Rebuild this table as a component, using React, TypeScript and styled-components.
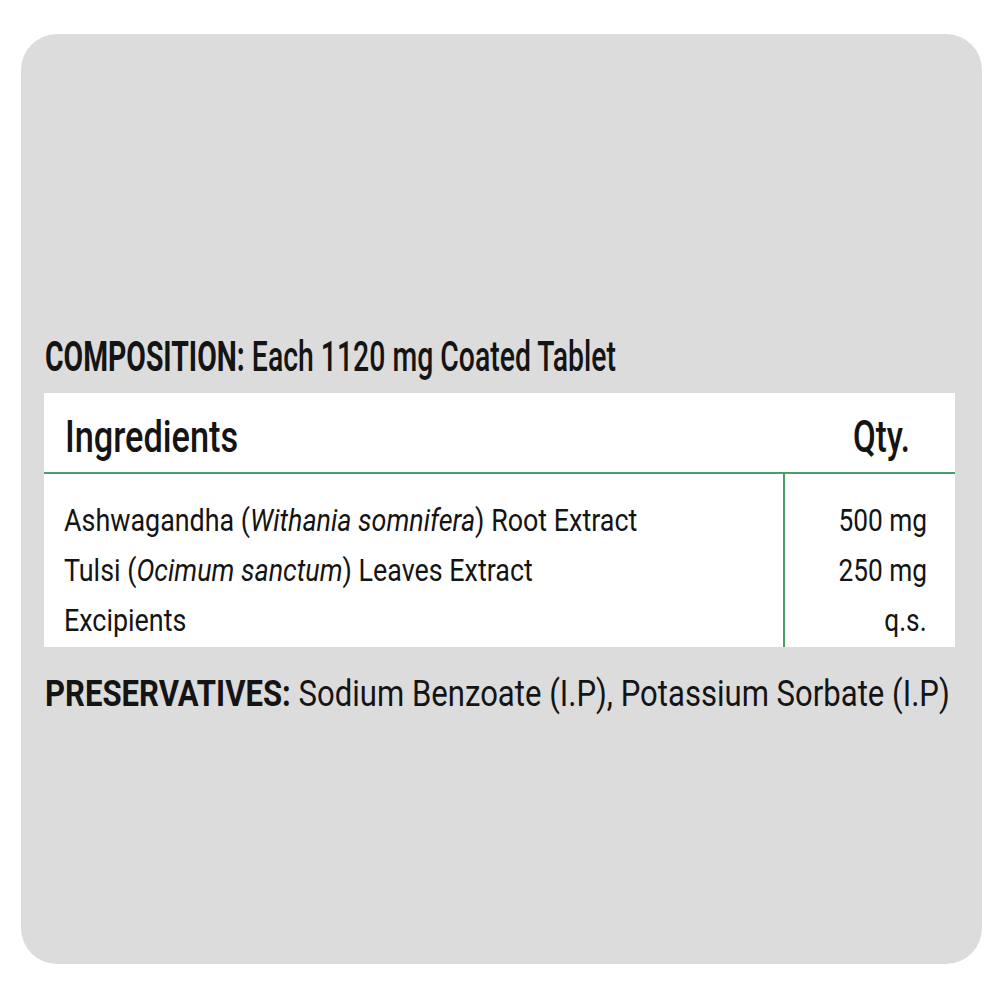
import React from "react";
import styled, { createGlobalStyle } from "styled-components";

const Global = createGlobalStyle`
  html, body { margin: 0; padding: 0; background: #ffffff; overflow: hidden; }
  body { font-family: Roboto, "Liberation Sans", sans-serif; color: #141414; }
`;

const Page = styled.div`
  width: 1000px;
  height: 1000px;
  padding: 34px 18px 36px 21px;
  box-sizing: border-box;
`;

const Card = styled.div`
  height: 100%;
  background: #dcdcdc;
  border-radius: 36px;
  display: flex;
  flex-direction: column;
  align-items: stretch;
  padding: 299px 27px 0 23px;
  box-sizing: border-box;
  overflow: hidden;
`;

/* Condensed rendering of a line of text */
const Squeeze = styled.span<{ $scale: number; $right?: boolean }>`
  display: inline-block;
  white-space: nowrap;
  transform: scaleX(${(p) => p.$scale});
  transform-origin: ${(p) => (p.$right ? "right" : "left")} center;
`;

const Title = styled.h1`
  margin: 0 0 12px 1px;
  font-size: 42px;
  font-weight: 500;
  line-height: 48px;
  color: #141414;
`;

const Strong = styled.span<{ $weight?: number }>`
  font-weight: ${(p) => p.$weight ?? 700};
`;

const Table = styled.div`
  background: #fff;
  display: grid;
  grid-template-columns: 739px 1fr;
`;

const HeadCell = styled.div<{ $right?: boolean }>`
  height: 81px;
  box-sizing: border-box;
  border-bottom: 2px solid #4e9c6c;
  display: flex;
  align-items: flex-start;
  justify-content: ${(p) => (p.$right ? "flex-end" : "flex-start")};
  padding: ${(p) => (p.$right ? "18px 45px 0 0" : "18px 0 0 21px")};
  font-size: 44px;
  line-height: 52px;
  font-weight: 500;
  color: #141414;
`;

const BodyCell = styled.div<{ $right?: boolean }>`
  display: flex;
  flex-direction: column;
  align-items: ${(p) => (p.$right ? "flex-end" : "flex-start")};
  padding: ${(p) => (p.$right ? "21px 28px 2px 0" : "21px 0 2px 20px")};
  border-left: ${(p) => (p.$right ? "2px solid #4e9c6c" : "none")};
  min-width: 0;
`;

const Line = styled.div`
  font-size: 32px;
  line-height: 50px;
  color: #141414;
`;

const Sci = styled.em`
  font-style: italic;
`;

const Preservatives = styled.p`
  margin: 25px 0 0 1px;
  font-size: 37px;
  line-height: 44px;
  color: #141414;
`;

const ingredients = [
  { name: <>Ashwagandha (<Sci>Withania somnifera</Sci>) Root Extract</>, qty: "500 mg" },
  { name: <>Tulsi (<Sci>Ocimum sanctum</Sci>) Leaves Extract</>, qty: "250 mg" },
  { name: <>Excipients</>, qty: "q.s." },
];

export default function App() {
  return (
    <>
      <Global />
      <Page>
        <Card>
          <Title>
            <Squeeze $scale={0.676}>
              <Strong $weight={700}>COMPOSITION:</Strong> Each 1120 mg Coated Tablet
            </Squeeze>
          </Title>
          <Table>
            <HeadCell>
              <Squeeze $scale={0.78}>Ingredients</Squeeze>
            </HeadCell>
            <HeadCell $right>
              <Squeeze $scale={0.75} $right>
                Qty.
              </Squeeze>
            </HeadCell>
            <BodyCell>
              {ingredients.map((it, i) => (
                <Line key={i}>
                  <Squeeze $scale={0.84}>{it.name}</Squeeze>
                </Line>
              ))}
            </BodyCell>
            <BodyCell $right>
              {ingredients.map((it, i) => (
                <Line key={i}>
                  <Squeeze $scale={0.82} $right>
                    {it.qty}
                  </Squeeze>
                </Line>
              ))}
            </BodyCell>
          </Table>
          <Preservatives>
            <Squeeze $scale={0.84}>
              <Strong>PRESERVATIVES:</Strong> Sodium Benzoate (I.P), Potassium Sorbate (I.P)
            </Squeeze>
          </Preservatives>
        </Card>
      </Page>
    </>
  );
}
